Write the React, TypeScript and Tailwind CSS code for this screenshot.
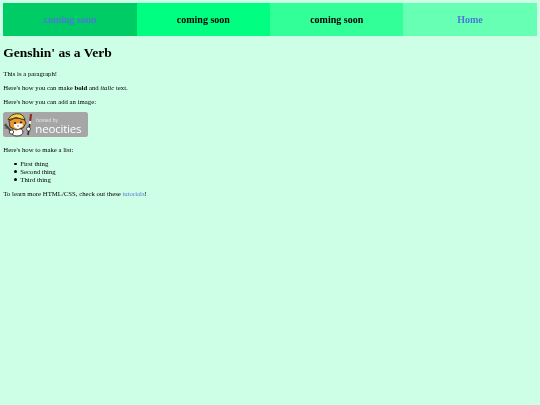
function Badge() {
  return (
    <div className="relative w-[85px] h-[25px] rounded-[2.5px] bg-[#a6a6a6] overflow-hidden">
      <svg className="absolute left-0 top-0" width="33" height="25" viewBox="0 0 33 25">
        {/* wrench */}
        <path d="M2.5 13 L8 19" stroke="#4a4a4a" strokeWidth="2" fill="none" />
        <path d="M1.5 14 L3 11.5 M4 16 L1.5 16" stroke="#4a4a4a" strokeWidth="1.2" fill="none" />
        {/* body */}
        <ellipse cx="14" cy="20" rx="6" ry="4" fill="#fff" stroke="#2f2a20" strokeWidth="0.9" />
        <ellipse cx="8.5" cy="20" rx="2.2" ry="2" fill="#fff" stroke="#2f2a20" strokeWidth="0.8" />
        {/* head */}
        <path d="M6 9 L7 15 L13 18 L20 16 L23 11 L21 7 L12 6 Z" fill="#e9982f" stroke="#3c2a12" strokeWidth="0.9" />
        {/* helmet */}
        <path d="M5 8 C7 3 12 1 17 2 C20 3 21 5 22 8 L13 5.5 Z" fill="#f2d24a" stroke="#3c2a12" strokeWidth="0.9" />
        {/* muzzle */}
        <path d="M11 12 L19 11 L20 14 L15 17 L11 15 Z" fill="#fff" />
        <circle cx="12" cy="11" r="1.1" fill="#1d1d1d" />
        <circle cx="18" cy="10.5" r="1.1" fill="#1d1d1d" />
        <path d="M14 13.5 L16 13.5 L15 15 Z" fill="#b5322a" />
        {/* paintbrush */}
        <path d="M28 2 L27.2 9" stroke="#8b2f2a" strokeWidth="2.2" />
        <path d="M27.2 9 L26.8 12" stroke="#e8e8e8" strokeWidth="2" />
        <path d="M26.8 12 L25 23" stroke="#3b2a1c" strokeWidth="1.6" />
        <circle cx="25.5" cy="17" r="2" fill="#fff" stroke="#2f2a20" strokeWidth="0.7" />
      </svg>
      <div className="absolute left-[33px] top-[5px] font-['Liberation_Sans',sans-serif] text-[5px] leading-[6px] text-[#e4e4e4]">hosted by</div>
      <div className="absolute left-[32px] top-[11px] font-['Open_Sans',sans-serif] text-[11.5px] leading-[11px] tracking-[-0.2px] text-white">neocities</div>
    </div>
  );
}

function Item({ children }: { children: string }) {
  return (
    <li className="flex items-center">
      <span className="w-[2.6px] h-[2.6px] mr-[3.4px] rounded-full bg-black" />
      {children}
    </li>
  );
}

export default function App() {
  return (
    <div className="min-h-[405px] bg-[#ccffe6] p-[3.33px] text-[6.76px] leading-[7.67px] text-black blur-[0.25px] font-['Liberation_Serif',serif]">
      <nav className="flex h-[33px] -mt-[0.33px] text-[10px] font-bold">
        <div className="flex-1 flex items-center justify-center bg-[#00cc66] text-[#4a78d8]">coming soon</div>
        <div className="flex-1 flex items-center justify-center bg-[#00ff80]">coming soon</div>
        <div className="flex-1 flex items-center justify-center bg-[#33ff99]">coming soon</div>
        <div className="flex-1 flex items-center justify-center bg-[#66ffb3] text-[#4a78d8]">Home</div>
      </nav>
      <h1 className="mt-[9px] text-[13.5px] leading-[15.33px] font-bold">Genshin' as a Verb</h1>
      <p className="mt-[9.2px]">This is a paragraph!</p>
      <p className="mt-[6.67px]">Here's how you can make <b>bold</b> and <i>italic</i> text.</p>
      <p className="mt-[6.67px]">Here's how you can add an image:</p>
      <div className="mt-[6.2px]"><Badge /></div>
      <p className="mt-[8.5px]">Here's how to make a list:</p>
      <ul className="mt-[7px] pl-[11px]">
        <Item>First thing</Item>
        <Item>Second thing</Item>
        <Item>Third thing</Item>
      </ul>
      <p className="mt-[6.67px]">To learn more HTML/CSS, check out these <a className="text-[#5a7ad8]">tutorials</a>!</p>
    </div>
  );
}
